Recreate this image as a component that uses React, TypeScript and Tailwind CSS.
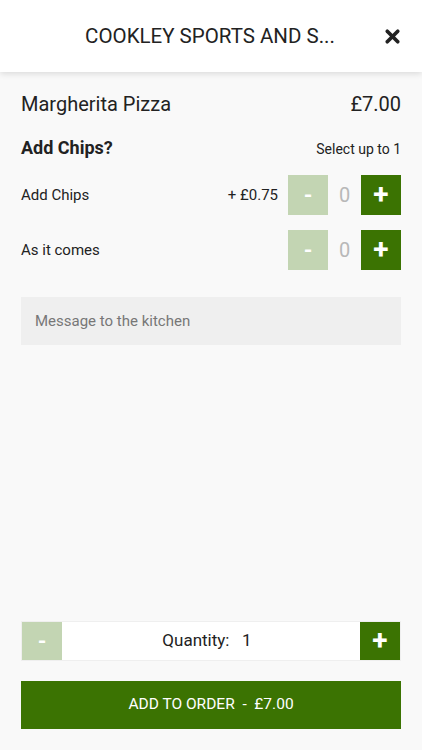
import { X } from 'lucide-react';

function Stepper({ count }: { count: number }) {
  return (
    <div className="flex items-center">
      <button className="w-10 h-10 bg-[#c3d5b3] text-white text-[22px] font-bold flex items-center justify-center">-</button>
      <span className="w-[33px] text-center text-[20px] text-[#b8b8b8]">{count}</span>
      <button className="w-10 h-10 bg-[#3b7302] text-white text-[28px] font-bold flex items-center justify-center leading-none">+</button>
    </div>
  );
}

export default function App() {
  return (
    <div className="h-[750px] w-[422px] bg-[#f9f9f9] flex flex-col text-[#222]" style={{ fontFamily: 'Roboto, "Liberation Sans", sans-serif' }}>
      <header className="h-[72px] bg-white shadow-[0_2px_6px_rgba(0,0,0,0.12)] flex items-center relative z-10">
        <h1 className="flex-1 text-center text-[20.5px] text-[#222] pr-[2px]">COOKLEY SPORTS AND S...</h1>
        <X size={21} strokeWidth={4.2} className="absolute right-[19px] top-[26px] text-[#222]" />
      </header>

      <main className="flex-1 px-[21px] pt-[20px]">
        <div className="flex justify-between items-center h-[24px]">
          <span className="text-[20px]">Margherita Pizza</span>
          <span className="text-[20px]">£7.00</span>
        </div>

        <div className="flex justify-between items-center mt-[20px] h-[22px]">
          <span className="text-[18px] font-bold">Add Chips?</span>
          <span className="text-[14px] mt-[5px]">Select up to 1</span>
        </div>

        <div className="flex items-center mt-[17px]">
          <span className="flex-1 text-[15px]">Add Chips</span>
          <span className="text-[15px] mr-[10px]">+ £0.75</span>
          <Stepper count={0} />
        </div>

        <div className="flex items-center mt-[15px]">
          <span className="flex-1 text-[15px]">As it comes</span>
          <Stepper count={0} />
        </div>

        <div className="mt-[27px] h-[48px] bg-[#efefef] flex items-center px-[14px] text-[15px] text-[#777]">
          Message to the kitchen
        </div>
      </main>

      <footer className="px-[21px] pb-[21px]">
        <div className="flex h-10 border border-[#efefef] bg-white">
          <button className="w-10 bg-[#c3d5b3] text-white text-[22px] font-bold flex items-center justify-center">-</button>
          <div className="flex-1 flex items-center justify-center text-[17px] whitespace-pre pr-[8px]">Quantity:   1</div>
          <button className="w-10 bg-[#3b7302] text-white text-[28px] font-bold flex items-center justify-center leading-none">+</button>
        </div>
        <button className="mt-[20px] w-full h-[48px] bg-[#3b7302] text-white text-[15.5px] whitespace-pre">ADD TO ORDER  -  £7.00</button>
      </footer>
    </div>
  );
}
